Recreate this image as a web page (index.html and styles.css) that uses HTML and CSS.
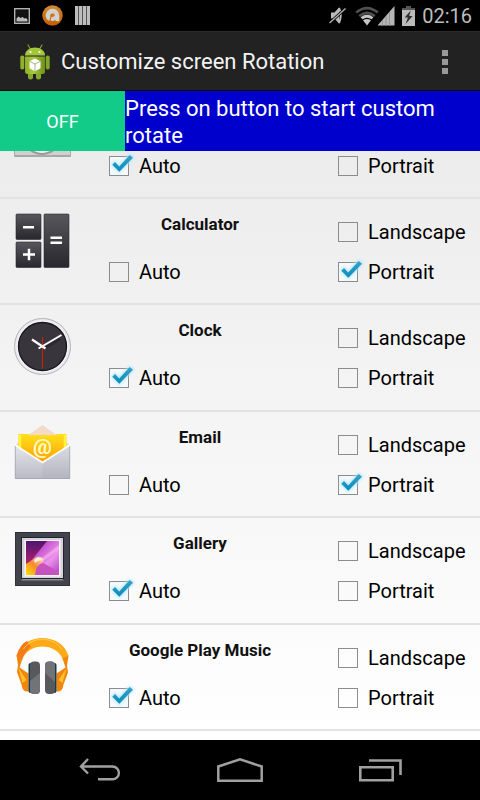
FILE: index.html
```
<!DOCTYPE html>
<html lang="en">
<head>
    <meta charset="UTF-8">
    <meta name="viewport" content="width=device-width, initial-scale=1.0">
    <title>Customize screen Rotation</title>
    <link rel="stylesheet" href="styles.css">
</head>
<body>
    <!-- shared tick for the checkboxes -->
    <svg class="defs" width="0" height="0">
        <defs>
            <linearGradient id="tick-fill" x1="0" y1="0" x2="0" y2="1">
                <stop offset="0" stop-color="#35a3cb"/>
                <stop offset="1" stop-color="#0a8cbc"/>
            </linearGradient>
            <filter id="glow" x="-50%" y="-50%" width="200%" height="200%"><feGaussianBlur stdDeviation="1.8"/></filter>
            <symbol id="tick" viewBox="-4 -6 34 32">
                <path d="M3.3 8.7 6 6l4.2 4.4L20.7-1 24 1.7 10.3 15.7z" fill="#9fe0f8" stroke="#b4e6f8" stroke-width="2.5" opacity=".8" filter="url(#glow)"/>
                <path d="M3.3 8.7 6 6l4.2 4.4L20.7-1 24 1.7 10.3 15.7z" fill="url(#tick-fill)"/>
            </symbol>
        </defs>
    </svg>

    <div class="status-bar">
        <div class="status-group">
            <svg width="16" height="16" viewBox="0 0 16 16">
                <rect x="0.7" y="0.7" width="14.6" height="14.6" fill="#111" stroke="#bbb" stroke-width="1.3"/>
                <path d="M2.5 13.5v-3l2-2 2 1.5 2-1 2 1.5 1.5-.5 1.5 1.5v2z" fill="#bbb"/>
            </svg>
            <svg class="avast" width="21" height="21" viewBox="0 0 21 21">
                <defs><linearGradient id="orange" x1="0" y1="0" x2="0" y2="1"><stop offset="0" stop-color="#d58a32"/><stop offset="1" stop-color="#c45e00"/></linearGradient></defs>
                <circle cx="10.5" cy="10.5" r="10.2" fill="url(#orange)"/>
                <path d="M5 14.5A6.800 6.800 0 1 1 17.300 10.500V16q-3 1-4.300-1-2 1.500-4.500.500l1-3.500q3 .5 3.300-1.700A2.300 2.300 0 1 0 8.400 11.500L7.200 16z" fill="#d2d2d2"/>
            </svg>
            <svg width="15" height="19" viewBox="0 0 15 19">
                <path d="M0 0h3v19H0zM4 0h3v19H4zM8 0h3v19H8zM12 0h3v19h-3z" fill="#bdbdbd"/>
                <path d="M3 0h1v19H3zM7 0h1v19H7zM11 0h1v19h-1z" fill="#555"/>
            </svg>
        </div>
        <div class="status-group right">
            <svg class="mute" width="17" height="19" viewBox="0 0 17 19">
                <path d="M2 6.5h3.5L10 1.500v16L5.500 12.500H2z" fill="#bbb"/>
                <path d="M10 2q3.500 7 0 15" fill="none" stroke="#bbb" stroke-width="2"/>
                <path d="M.5 17 16.500 2.500" stroke="#000" stroke-width="3"/>
                <path d="M.5 17 16.500 2.500" stroke="#aaa" stroke-width="1.500"/>
            </svg>
            <svg width="40" height="20" viewBox="0 0 40 20">
                <g fill="none" stroke="#505050" stroke-width="2.6">
                    <path d="M1.2 6.6Q12 -2.4 22.8 6.6"/>
                    <path d="M4.2 10Q12 3.6 19.8 10"/>
                </g>
                <path d="M5.6 11.2Q12 6.4 18.4 11.2L16.6 13.3Q12 10 7.4 13.3z" fill="#c5c5c5"/>
                <path d="M8 14.3Q12 11.7 16 14.3L12 19.4z" fill="#c5c5c5"/>
                <path d="M22.5 19.5 39.5 0v19.5z" fill="#b5b5b5"/>
                <path d="M27.5 14v6M31 10v10M34.5 6v14" stroke="#8a8a8a" stroke-width=".8"/>
            </svg>
            <svg class="battery" width="13" height="20" viewBox="0 0 13 20">
                <path d="M4 0h5v2h4v4H0V2h4z" fill="#555"/>
                <path d="M0 4h13v16H0z" fill="#bbb"/>
                <path d="M8.8 4.5 2.7 11.5h3.2L3.6 18l7-8H7.2z" fill="#303030"/>
            </svg>
            <span class="clock">02:16</span>
        </div>
    </div>

    <header class="action-bar">
        <svg class="launcher" width="30" height="36" viewBox="0 0 30 36">
            <defs><linearGradient id="droid" x1="0" y1="0" x2="1" y2="0"><stop offset="0" stop-color="#8fae27"/><stop offset=".4" stop-color="#a9c93f"/><stop offset="1" stop-color="#6d8f18"/></linearGradient></defs>
            <path d="M8 1l3 5M22 1l-3 5" stroke="#82a125" stroke-width="1.2" stroke-linecap="round"/>
            <path d="M5 11.5C5 .8 25 .8 25 11.5z" fill="#a3c73b"/>
            <circle cx="10.5" cy="8" r="1.1" fill="#fff"/><circle cx="19.5" cy="8" r="1.1" fill="#fff"/>
            <rect x="0.3" y="11.5" width="4" height="14" rx="1.8" fill="#8fb12d"/>
            <rect x="25.7" y="11.5" width="4" height="14" rx="1.8" fill="#82a427"/>
            <rect x="8" y="26" width="5" height="9.5" rx="2.3" fill="#86a82b"/>
            <rect x="16" y="26" width="5" height="9.5" rx="2.3" fill="#86a82b"/>
            <path d="M5 12.5h20v15q0 2.5-2.5 2.5h-15Q5 30 5 27.5z" fill="url(#droid)"/>
            <path d="M15 14.5l5.5 2.7v7L15 27.3l-5.5-3v-7z" fill="#fff"/>
            <path d="M9.7 17.3 15 20l5.3-2.7M15 20v7" fill="none" stroke="#9aa77a" stroke-width=".9"/>
        </svg>
        <h1>Customize screen Rotation</h1>
        <button class="overflow" aria-label="More options"><i></i><i></i><i></i></button>
    </header>

    <div class="banner">
        <button class="toggle">OFF</button>
        <p>Press on button to start custom rotate</p>
    </div>

    <main class="app-list">
        <section class="app cut">
            <div class="icon">
                <svg width="57" height="54" viewBox="0 0 57 54">
                    <rect x="0" y="4" width="57" height="50" rx="1" fill="#a8a8a8"/>
                    <rect x="1" y="5" width="55" height="47" fill="#d0d0d0"/>
                    <ellipse cx="28" cy="29" rx="21" ry="23" fill="#999"/>
                    <ellipse cx="28" cy="28" rx="19" ry="22" fill="#f4f4f4"/>
                </svg>
            </div>
            <div class="middle">
                <label><input type="checkbox" checked><svg class="tick"><use href="#tick"/></svg>Auto</label>
            </div>
            <div class="side">
                <label><input type="checkbox"><svg class="tick"><use href="#tick"/></svg>Portrait</label>
            </div>
        </section>

        <section class="app">
            <div class="icon">
                <svg width="57" height="57" viewBox="0 0 57 57">
                    <defs><linearGradient id="key" x1="0" y1="0" x2="0" y2="1"><stop offset="0" stop-color="#57575c"/><stop offset="1" stop-color="#28272d"/></linearGradient></defs>
                    <g fill="url(#key)" stroke="#29282d" stroke-width=".6">
                        <rect x="2" y="2" width="25" height="25.5" rx="1"/>
                        <rect x="2" y="30" width="25" height="25.5" rx="1"/>
                        <rect x="30" y="2" width="25" height="53.5" rx="1"/>
                    </g>
                    <path d="M9 15.3h11M9 42.5h12M15 36.7v11.6M36.5 25.8h11.5M36.5 30.8h11.5" stroke="#fff" stroke-width="2.5"/>
                </svg>
            </div>
            <div class="middle">
                <h2>Calculator</h2>
                <label><input type="checkbox"><svg class="tick"><use href="#tick"/></svg>Auto</label>
            </div>
            <div class="side">
                <label><input type="checkbox"><svg class="tick"><use href="#tick"/></svg>Landscape</label>
                <label><input type="checkbox" checked><svg class="tick"><use href="#tick"/></svg>Portrait</label>
            </div>
        </section>

        <section class="app">
            <div class="icon">
                <svg width="57" height="57" viewBox="0 0 57 57">
                    <circle cx="28.5" cy="28.5" r="28" fill="#e9e9ef" stroke="#b5b5b8"/>
                    <circle cx="28.5" cy="28.5" r="26" fill="#f4f3f8"/>
                    <circle cx="28.5" cy="28.5" r="24" fill="#38353d" stroke="#17171c" stroke-width="1.3"/>
                    <path d="M29 31 46 21" stroke="#2b2830" stroke-width="3"/>
                    <path d="M28.5 19v31.5" stroke="#c22408" stroke-width="1.2"/>
                    <path d="M24.5 30.5 47.5 17" stroke="#fff" stroke-width="2"/>
                    <path d="M18 21.5l13.5 9" stroke="#fff" stroke-width="2.2"/>
                </svg>
            </div>
            <div class="middle">
                <h2>Clock</h2>
                <label><input type="checkbox" checked><svg class="tick"><use href="#tick"/></svg>Auto</label>
            </div>
            <div class="side">
                <label><input type="checkbox"><svg class="tick"><use href="#tick"/></svg>Landscape</label>
                <label><input type="checkbox"><svg class="tick"><use href="#tick"/></svg>Portrait</label>
            </div>
        </section>

        <section class="app">
            <div class="icon">
                <svg width="57" height="57" viewBox="0 0 57 57">
                    <defs>
                        <linearGradient id="letter" x1="0" y1="0" x2="0" y2="1"><stop offset="0" stop-color="#ffe01c"/><stop offset="1" stop-color="#ff9800"/></linearGradient>
                        <linearGradient id="envelope" x1="0" y1="0" x2="0" y2="1"><stop offset="0" stop-color="#e6e6ec"/><stop offset="1" stop-color="#b9b9c4"/></linearGradient>
                    </defs>
                    <path d="M1 20 28.5 0 56 20v10H1z" fill="#e6dcdc"/>
                    <path d="M4.5 9h48v32h-48z" fill="url(#letter)"/>
                    <path d="M6 10v20M51 10v20" stroke="#fff33c" stroke-width="2.5"/>
                    <path d="M14 10 28.5 1 43 10z" fill="#f3dac9"/>
                    <text class="at" x="28.5" y="29" text-anchor="middle">@</text>
                    <path d="M1 20l27.5 17.5L56 20v34H1z" fill="url(#envelope)"/>
                    <path d="M28.5 38 56 20v34H28.5z" fill="#777785" opacity=".08"/>
                    <path d="M1 20l27.5 17.5L56 20" fill="none" stroke="#fff" stroke-width="1.5"/>
                    <path d="M1.3 21v32.5h54.4V21" fill="none" stroke="#a4a4ad" stroke-width=".8"/>
                </svg>
            </div>
            <div class="middle">
                <h2>Email</h2>
                <label><input type="checkbox"><svg class="tick"><use href="#tick"/></svg>Auto</label>
            </div>
            <div class="side">
                <label><input type="checkbox"><svg class="tick"><use href="#tick"/></svg>Landscape</label>
                <label><input type="checkbox" checked><svg class="tick"><use href="#tick"/></svg>Portrait</label>
            </div>
        </section>

        <section class="app">
            <div class="icon">
                <svg width="57" height="57" viewBox="0 0 57 57">
                    <defs>
                        <linearGradient id="photo" x1="0" y1="0" x2="1" y2="1"><stop offset="0" stop-color="#8a1284"/><stop offset=".4" stop-color="#cf5fd6"/><stop offset=".65" stop-color="#eb92ea"/><stop offset="1" stop-color="#b03cc4"/></linearGradient>
                        <linearGradient id="flame" x1="0" y1="1" x2="1" y2="0"><stop offset="0" stop-color="#ffe000"/><stop offset=".5" stop-color="#f68a2e"/><stop offset="1" stop-color="#ffe9dc"/></linearGradient>
                        <linearGradient id="dusk" x1="0" y1="0" x2="0" y2="1"><stop offset="0" stop-color="#4f1470"/><stop offset="1" stop-color="#c02470"/></linearGradient>
                    </defs>
                    <rect x="1" y="1" width="55" height="54" fill="#42434d"/>
                    <rect x="1.5" y="1.5" width="54" height="53" fill="none" stroke="#30303a"/>
                    <path d="M7 49.5 9 47h38l3 2.5z" fill="#8e8f94"/>
                    <rect x="7" y="6" width="43" height="42" fill="#22222a"/>
                    <rect x="8" y="7" width="41" height="40" fill="#d5d3d8"/>
                    <rect x="10.5" y="9" width="36" height="36.5" fill="#f5f4f6"/>
                    <rect x="12" y="10" width="33" height="34" fill="url(#photo)"/>
                    <path d="M12 10h21L21 25l-9 12z" fill="url(#dusk)"/>
                    <path d="M12 44V33l9-6q4-3 9 1l-1 3q-5 2-7 13z" fill="url(#flame)"/>
                    <path d="M21 44q1-11 8-12l16 9v3z" fill="#c552bd"/>
                    <path d="M28 27 45 14v5L29 30z" fill="#f7b4f0" opacity=".6"/>
                    <path d="M20 29q4-5 9 0-5 0-8 3z" fill="#fff3df"/>
                </svg>
            </div>
            <div class="middle">
                <h2>Gallery</h2>
                <label><input type="checkbox" checked><svg class="tick"><use href="#tick"/></svg>Auto</label>
            </div>
            <div class="side">
                <label><input type="checkbox"><svg class="tick"><use href="#tick"/></svg>Landscape</label>
                <label><input type="checkbox"><svg class="tick"><use href="#tick"/></svg>Portrait</label>
            </div>
        </section>

        <section class="app">
            <div class="icon">
                <svg width="57" height="57" viewBox="0 0 57 57">
                    <path d="M2.5 18C9-6 48-6 54.5 18l-5.500 4C43 4 14 4 8 22z" fill="#ffa916"/>
                    <path d="M2.5 18Q6 6 13 3l4 6Q11 13 8 22z" fill="#f47b16"/>
                    <path d="M9.5 11C18-2 39-2 47.500 11" fill="none" stroke="#ffc94f"/>
                    <path d="M2.5 17.500l6 3-3 9 9 6v18q-6 1-7-7L3 34l1-7zM54.500 17.500l-6 3 3 9-9 6v18q6 1 7-7l4.500-12-1-7z" fill="#f2860c"/>
                    <path d="M4.5 30l8 12-4 3zM52.500 30l-8 12 4 3z" fill="#ffc02b"/>
                    <rect x="14.5" y="25" width="4" height="30" rx="2" fill="#173d48"/>
                    <rect x="38.500" y="25" width="4" height="30" rx="2" fill="#173d48"/>
                    <rect x="16" y="23.500" width="10" height="32.500" rx="4" fill="#58595d"/>
                    <rect x="31" y="23.500" width="10" height="32.500" rx="4" fill="#58595d"/>
                    <path d="M16 43l10-8v17q0 4-4 4h-2q-4 0-4-4zM31 35l10 9V27.500q0-4-4-4h-2q-4 0-4 4z" fill="#727377"/>
                </svg>
            </div>
            <div class="middle">
                <h2>Google Play Music</h2>
                <label><input type="checkbox" checked><svg class="tick"><use href="#tick"/></svg>Auto</label>
            </div>
            <div class="side">
                <label><input type="checkbox"><svg class="tick"><use href="#tick"/></svg>Landscape</label>
                <label><input type="checkbox"><svg class="tick"><use href="#tick"/></svg>Portrait</label>
            </div>
        </section>
    </main>

    <nav class="nav-bar">
        <button aria-label="Back">
            <svg width="42" height="24" viewBox="0 0 42 24"><path d="M9 1 2 8.5l7 7M2 8.5h31.5a6.3 6.3 0 0 1 0 12.8H19" fill="none" stroke="#a0a0a0" stroke-width="2.4"/></svg>
        </button>
        <button aria-label="Home">
            <svg width="46" height="26" viewBox="0 0 46 26"><path d="M1.3 9.5 23 2.3l21.7 7.2v14.2H1.3z" fill="none" stroke="#a0a0a0" stroke-width="2.5"/></svg>
        </button>
        <button aria-label="Recent apps">
            <svg width="43" height="23" viewBox="0 0 43 23"><path d="M1.3 8.3h32.4v13H1.3zM10 1.5h31.5V16" fill="none" stroke="#a0a0a0" stroke-width="2.6"/></svg>
        </button>
    </nav>
</body>
</html>
```
FILE: styles.css
```
* {
    box-sizing: border-box;
}

body {
    margin: 0;
    min-height: 100vh;
    display: flex;
    flex-direction: column;
    font-family: Roboto, "Liberation Sans", sans-serif;
    color: #000;
    background-color: #000;
}

h1, h2, p {
    margin: 0;
}

button {
    font-family: inherit;
    border: none;
    padding: 0;
    background: none;
    cursor: pointer;
}

svg {
    display: block;
    flex: none;
}

.defs {
    position: absolute;
}

/* status bar */
.status-bar {
    height: 31px;
    display: flex;
    justify-content: space-between;
    align-items: center;
    padding: 0 8px 0 14px;
    background-color: #000;
}

.status-group {
    display: flex;
    align-items: center;
    gap: 12px;
}

.status-group.right {
    gap: 7px;
}

.mute {
    margin-right: 2px;
}

.clock {
    font-size: 20px;
    line-height: 24px;
    color: #bdbdbd;
}

/* title bar */
.action-bar {
    height: 60px;
    display: flex;
    align-items: center;
    padding: 2px 24px 0 20px;
    background-color: #222;
    border-top: 1px solid #2c2c2c;
    border-bottom: 1px solid #0c0c0c;
}

.action-bar h1 {
    flex: 1;
    margin-left: 11px;
    font-size: 22px;
    font-weight: 400;
    line-height: 28px;
    color: #f3f3f3;
}

.overflow {
    display: flex;
    flex-direction: column;
    gap: 3px;
    padding: 0 8px;
}

.overflow i {
    width: 6px;
    height: 6px;
    background-color: #999;
}

/* on/off strip */
.banner {
    display: flex;
    min-height: 60px;
    background-color: #0000cd;
}

.toggle {
    width: 125px;
    flex: none;
    font-size: 18px;
    color: #fff;
    background-color: #13cb89;
}

.banner p {
    padding-top: 4px;
    font-size: 22px;
    line-height: 27px;
    color: #fff;
}

/* app list */
.app-list {
    flex: 1;
    display: flex;
    flex-direction: column;
    padding-bottom: 9px;
    background: linear-gradient(#ececec, #fff);
}

.app {
    flex: 1 0 auto;
    display: grid;
    grid-template-columns: 86px 1fr 166px;
    padding-top: 13px;
    border-bottom: 2px solid #e2e2e2;
}

.icon {
    padding-left: 14px;
}

.middle h2 {
    height: 40px;
    font-size: 17px;
    font-weight: 700;
    line-height: 24px;
    text-align: center;
    color: #111;
}

.middle label {
    padding-left: 23px;
}

.side label {
    padding-left: 24px;
}

label {
    display: flex;
    align-items: center;
    height: 40px;
    font-size: 20px;
    cursor: pointer;
}

input[type="checkbox"] {
    appearance: none;
    flex: none;
    width: 20px;
    height: 20px;
    margin: 0 10px 0 0;
    border: 1px solid #8c8c8c;
}

input:checked {
    background-color: #f4fafc;
}

/* the tick hangs over the corner of its box */
.tick {
    width: 34px;
    height: 32px;
    margin: 0 0 0 -34px;
    visibility: hidden;
}

input:checked + .tick {
    visibility: visible;
}

/* row already scrolled under the banner */
.app.cut {
    flex: none;
    height: 48px;
    align-content: end;
    padding: 0 0 11px;
    overflow: hidden;
}

.cut .icon {
    height: 11px;
    display: flex;
    align-items: flex-end;
}

.at {
    font-size: 21px;
    font-weight: 700;
    fill: #fff9c8;
}

/* navigation */
.nav-bar {
    height: 60px;
    display: flex;
    justify-content: center;
    align-items: center;
    gap: 96px;
}
```
